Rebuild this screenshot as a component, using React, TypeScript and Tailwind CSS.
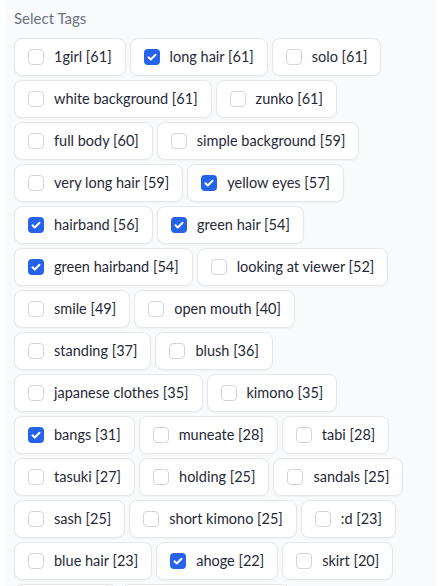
import React, { useState } from 'react';

type Tag = { name: string; count: number; checked?: boolean };

const tags: Tag[] = [
  { name: '1girl', count: 61 },
  { name: 'long hair', count: 61, checked: true },
  { name: 'solo', count: 61 },
  { name: 'white background', count: 61 },
  { name: 'zunko', count: 61 },
  { name: 'full body', count: 60 },
  { name: 'simple background', count: 59 },
  { name: 'very long hair', count: 59 },
  { name: 'yellow eyes', count: 57, checked: true },
  { name: 'hairband', count: 56, checked: true },
  { name: 'green hair', count: 54, checked: true },
  { name: 'green hairband', count: 54, checked: true },
  { name: 'looking at viewer', count: 52 },
  { name: 'smile', count: 49 },
  { name: 'open mouth', count: 40 },
  { name: 'standing', count: 37 },
  { name: 'blush', count: 36 },
  { name: 'japanese clothes', count: 35 },
  { name: 'kimono', count: 35 },
  { name: 'bangs', count: 31, checked: true },
  { name: 'muneate', count: 28 },
  { name: 'tabi', count: 28 },
  { name: 'tasuki', count: 27 },
  { name: 'holding', count: 25 },
  { name: 'sandals', count: 25 },
  { name: 'sash', count: 25 },
  { name: 'short kimono', count: 25 },
  { name: ':d', count: 23 },
  { name: 'blue hair', count: 23 },
  { name: 'ahoge', count: 22, checked: true },
  { name: 'skirt', count: 20 },
  { name: 'obi', count: 20 },
  { name: 'closed mouth', count: 19 },
  { name: 'sidelocks', count: 18 },
];

function Box({ on }: { on: boolean }) {
  if (on) {
    return (
      <span className="w-4 h-4 rounded-[4px] bg-[#2563eb] flex items-center justify-center shrink-0">
        <svg viewBox="0 0 16 16" className="w-4 h-4" fill="none">
          <path d="M4.5 8.2l2.3 2.3 4.7-4.8" stroke="white" strokeWidth="2" strokeLinecap="round" strokeLinejoin="round" />
        </svg>
      </span>
    );
  }
  return <span className="w-4 h-4 rounded-[4px] border border-[#d1d5db] bg-white shrink-0" />;
}

export default function App() {
  const [selected, setSelected] = useState<Record<string, boolean>>(
    Object.fromEntries(tags.map((t) => [t.name, !!t.checked]))
  );

  return (
    <div className="min-h-screen bg-white font-['Lato',sans-serif] overflow-hidden h-[586px]">
      <div className="ml-[5px] w-[432px] min-h-[586px] bg-[#f9fafb] pl-[9px] pr-[17px] pt-[8px]">
        <div className="text-[15px] leading-5 text-[#6b7280] mb-[10px]">Select Tags</div>
        <div className="flex flex-wrap gap-1">
          {tags.map((t) => (
            <label
              key={t.name}
              className="flex items-center gap-2.5 h-[38px] px-[13px] bg-white border border-[#e5e7eb] rounded-lg shadow-[0_1px_2px_rgba(0,0,0,0.04)] cursor-pointer"
              onClick={() => setSelected((s) => ({ ...s, [t.name]: !s[t.name] }))}
            >
              <Box on={selected[t.name]} />
              <span className="text-[14.5px] text-[#1f2937] whitespace-nowrap">
                {t.name} [{t.count}]
              </span>
            </label>
          ))}
        </div>
      </div>
    </div>
  );
}
